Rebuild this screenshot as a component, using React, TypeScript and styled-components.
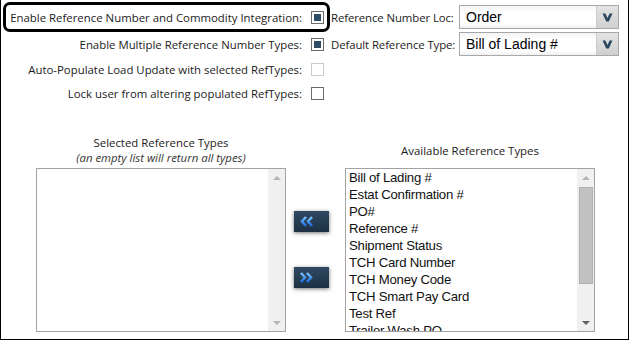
import * as React from "react";
import styled, { createGlobalStyle } from "styled-components";

const GlobalStyle = createGlobalStyle`
  html, body {
    margin: 0;
    padding: 0;
    background: #fff;
  }
  * {
    box-sizing: border-box;
  }
`;

const availableTypes = [
    "Bill of Lading #",
    "Estat Confirmation #",
    "PO#",
    "Reference #",
    "Shipment Status",
    "TCH Card Number",
    "TCH Money Code",
    "TCH Smart Pay Card",
    "Test Ref",
    "Trailer Wash PO",
];

const ChevronDown: React.FC = () => (
    <svg width="11" height="9" viewBox="0 0 11 9">
        <path d="M0.5 0.5 L3.4 0.5 L5.5 5 L7.6 0.5 L10.5 0.5 L6.8 8.5 L4.2 8.5 Z" fill="#2b4863"/>
    </svg>
);

const DoubleChevron: React.FC<{ dir: "left" | "right" }> = ({dir}) => (
    <svg width="15" height="11" viewBox="0 0 15 11"
         style={{transform: dir === "right" ? "scaleX(-1)" : undefined}}>
        <defs>
            <linearGradient id={`chev-${dir}`} x1="0" y1="0" x2="0" y2="1">
                <stop offset="0" stopColor="#7cc0ff"/>
                <stop offset="1" stopColor="#1c6bdc"/>
            </linearGradient>
        </defs>
        <path d="M7 1 L3 5.5 L7 10 M13 1 L9 5.5 L13 10" fill="none" stroke={`url(#chev-${dir})`}
              strokeWidth="2.6"/>
    </svg>
);

const App: React.FC = () => {
    return (
        <>
            <GlobalStyle/>
            <Frame>
                <TopSection>
                    <Row height={24}>
                        <LeftCell highlighted>
                            <Label>Enable Reference Number and Commodity Integration:</Label>
                            <CheckBox checked/>
                        </LeftCell>
                        <RightLabel>Reference Number Loc:</RightLabel>
                        <Select>
                            <SelectText>Order</SelectText>
                            <SelectArrow><ChevronDown/></SelectArrow>
                        </Select>
                    </Row>
                    <Row height={24}>
                        <LeftCell>
                            <Label>Enable Multiple Reference Number Types:</Label>
                            <CheckBox checked/>
                        </LeftCell>
                        <RightLabel>Default Reference Type:</RightLabel>
                        <Select>
                            <SelectText>Bill of Lading #</SelectText>
                            <SelectArrow><ChevronDown/></SelectArrow>
                        </Select>
                    </Row>
                    <Row height={21}>
                        <LeftCell>
                            <Label>Auto-Populate Load Update with selected RefTypes:</Label>
                            <CheckBox disabled/>
                        </LeftCell>
                    </Row>
                    <Row height={21}>
                        <LeftCell>
                            <Label>Lock user from altering populated RefTypes:</Label>
                            <CheckBox/>
                        </LeftCell>
                    </Row>
                </TopSection>

                <Lists>
                    <Header>
                        <HeaderTitle>Selected Reference Types</HeaderTitle>
                        <HeaderNote>(an empty list will return all types)</HeaderNote>
                    </Header>
                    <span/>
                    <Header>
                        <HeaderTitle>Available Reference Types</HeaderTitle>
                    </Header>

                    <ListBox>
                        <Items/>
                        <Scrollbar>
                            <ScrollArrow><Triangle up/></ScrollArrow>
                            <Track/>
                            <ScrollArrow><Triangle/></ScrollArrow>
                        </Scrollbar>
                    </ListBox>
                    <Buttons>
                        <MoveButton title="Add"><DoubleChevron dir="left"/></MoveButton>
                        <MoveButton title="Remove"><DoubleChevron dir="right"/></MoveButton>
                    </Buttons>
                    <ListBox>
                        <Items>
                            {availableTypes.map((t) => <Item key={t}>{t}</Item>)}
                        </Items>
                        <Scrollbar>
                            <ScrollArrow><Triangle up/></ScrollArrow>
                            <Track><Thumb/></Track>
                            <ScrollArrow><Triangle active/></ScrollArrow>
                        </Scrollbar>
                    </ListBox>
                </Lists>
            </Frame>
        </>
    );
};

export default App;

const Frame = styled.div`
  width: 629px;
  height: 340px;
  border: 1px solid #000;
  border-top: none;
  background: #fff;
  font-family: "Open Sans", "Noto Sans", sans-serif;
  color: #1b1b1b;
`;

const TopSection = styled.div`
  display: flex;
  flex-direction: column;
  gap: 3px;
  padding-top: 5px;
`;

const Row = styled.div<{ height: number }>`
  display: flex;
  align-items: center;
  height: ${(p) => p.height}px;
`;

const LeftCell = styled.div<{ highlighted?: boolean }>`
  width: 321px;
  height: 100%;
  margin-left: 5px;
  padding-right: 3px;
  display: flex;
  align-items: center;
  justify-content: flex-end;
  gap: 9px;
  border-radius: 4px;
  box-shadow: ${(p) => (p.highlighted ? "0 0 0 3px #000" : "none")};
`;

const Label = styled.span`
  font-size: 11.4px;
  white-space: nowrap;
`;

const RightLabel = styled(Label)`
  width: 128px;
  margin-left: 4px;
  letter-spacing: -0.1px;
`;

const CheckBox = styled.span<{ checked?: boolean; disabled?: boolean }>`
  display: block;
  width: 13px;
  height: 13px;
  border: 1px solid ${(p) => (p.disabled ? "#cccccc" : "#6a6a6a")};
  background: #fff;
  padding: 2px;
  flex-shrink: 0;

  &::after {
    content: "";
    display: ${(p) => (p.checked ? "block" : "none")};
    width: 100%;
    height: 100%;
    background: #2e4c66;
  }
`;

const Select = styled.div`
  display: flex;
  width: 160px;
  height: 24px;
  border: 1px solid #a8a8a8;
`;

const SelectText = styled.div`
  flex: 1;
  display: flex;
  align-items: center;
  padding-left: 6px;
  font-family: "Liberation Sans", Arial, sans-serif;
  font-size: 14px;
  color: #000;
  background: linear-gradient(#f4f4f4, #ffffff 30%, #ffffff 80%, #f0f0f0);
  border-right: 1px solid #c9c9c9;
`;

const SelectArrow = styled.div`
  width: 21px;
  display: flex;
  align-items: center;
  justify-content: center;
  background: linear-gradient(#e4e4e4, #d0d0d0);
`;

const Lists = styled.div`
  display: grid;
  grid-template-columns: 250px 59px 250px;
  grid-template-rows: 30px 164px;
  row-gap: 3px;
  padding-left: 35px;
  margin-top: 31px;
`;

const Header = styled.div`
  display: flex;
  flex-direction: column;
  align-items: center;
  justify-content: center;
`;

const HeaderTitle = styled.span`
  font-size: 11.4px;
  line-height: 15px;
  white-space: nowrap;
`;

const HeaderNote = styled(HeaderTitle)`
  font-style: italic;
  color: #333;
`;

const ListBox = styled.div`
  display: flex;
  border: 1px solid #a3a3a3;
  overflow: hidden;
  background: #fff;
`;

const Items = styled.div`
  flex: 1;
  padding-left: 3px;
  overflow: hidden;
`;

const Item = styled.div`
  font-family: "Liberation Sans", Arial, sans-serif;
  font-size: 13.2px;
  letter-spacing: -0.25px;
  line-height: 17px;
  color: #111;
  white-space: nowrap;
`;

const Scrollbar = styled.div`
  width: 17px;
  display: flex;
  flex-direction: column;
  background: #f0f0f0;
`;

const ScrollArrow = styled.div`
  height: 17px;
  display: flex;
  align-items: center;
  justify-content: center;
`;

const Triangle = styled.span<{ up?: boolean; active?: boolean }>`
  width: 0;
  height: 0;
  border-left: 4px solid transparent;
  border-right: 4px solid transparent;
  ${(p) => (p.up ? "border-bottom" : "border-top")}: 4px solid ${(p) => (p.active ? "#606060" : "#b4b4b4")};
`;

const Track = styled.div`
  flex: 1;
  padding: 1px 1px 0 2px;
`;

const Thumb = styled.div`
  height: 97px;
  background: #c1c1c1;
  border: 1px solid #b0b0b0;
`;

const Buttons = styled.div`
  display: flex;
  flex-direction: column;
  gap: 35px;
  padding: 43px 0 0 8px;
`;

const MoveButton = styled.button`
  width: 35px;
  height: 21px;
  border: none;
  padding: 0 0 0 5px;
  display: flex;
  align-items: center;
  background: linear-gradient(#2f4a62, #1d3042);
  box-shadow: 0 1px 4px rgba(0, 0, 0, 0.55);
  cursor: pointer;
`;
